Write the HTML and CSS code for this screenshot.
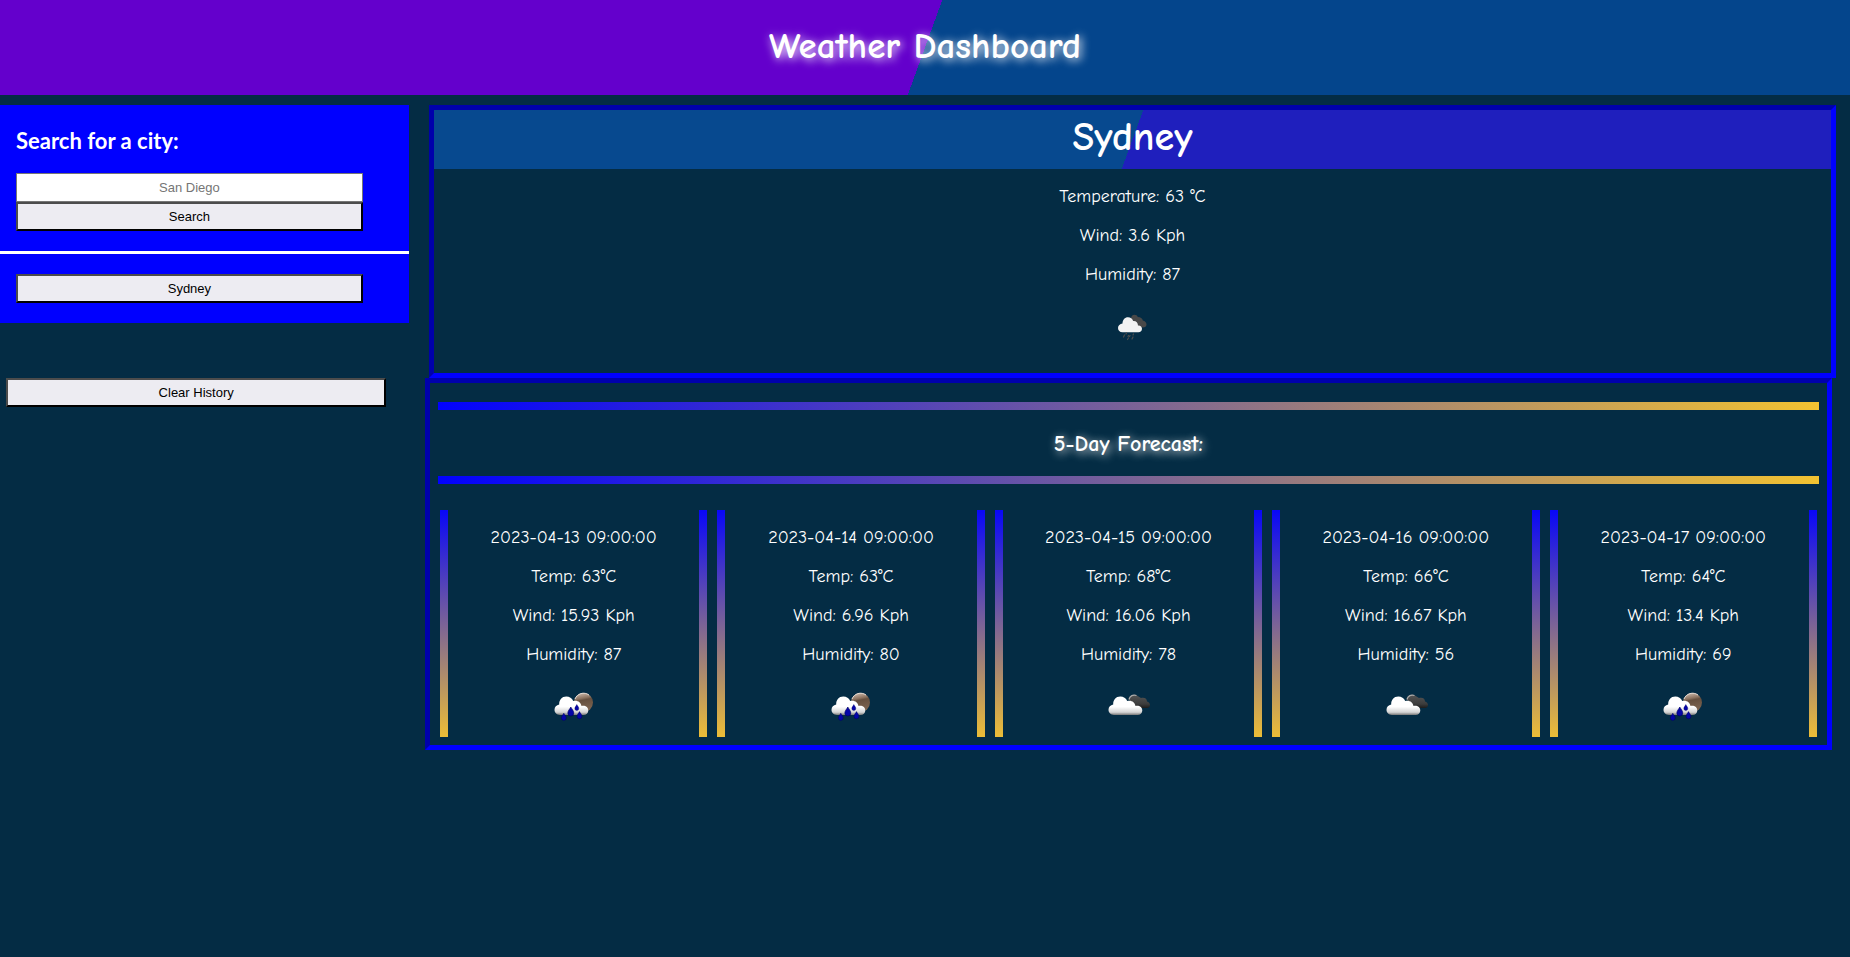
FILE: index.html
```html
<!DOCTYPE html>
<html lang="en">
<head>
<meta charset="utf-8">
<meta name="viewport" content="width=device-width, initial-scale=1">
<title>Weather Dashboard</title>
<link rel="stylesheet" href="styles.css">
</head>
<body>
<svg class="defs" aria-hidden="true">
  <defs>
    <linearGradient id="cloudFill" x1="0" y1="0" x2="0" y2="1"><stop offset="0.55" stop-color="#fff"/><stop offset="0.85" stop-color="#d4d4d4"/><stop offset="1" stop-color="#777"/></linearGradient>
    <linearGradient id="darkFill" x1="0" y1="0" x2="0" y2="1"><stop offset="0" stop-color="#555"/><stop offset="0.7" stop-color="#3c3c3c"/><stop offset="1" stop-color="#1c1c1c"/></linearGradient>
    <linearGradient id="moonFill" x1="0" y1="0" x2="0.2" y2="1"><stop offset="0" stop-color="#d9c8bc"/><stop offset="0.35" stop-color="#8c7360"/><stop offset="0.45" stop-color="#66503f"/><stop offset="1" stop-color="#7d6450"/></linearGradient>
    <path id="cloud" d="M11 33C7.500 33 5.500 30.500 5.500 27.800C5.500 25 7.500 23 10.200 22.500C10 18 13 14.500 17.300 14.500C20.500 14.500 23 16.200 24.200 19C28 17.700 32 20 32.500 24C36.500 23.300 39.300 25.500 39.300 28.500C39.300 31 37.300 33 34.500 33Z"/>
    <path id="drop" d="M0-4.500C1-2.500 3-0.700 3 1.500A3 3 0 0 1-3 1.500C-3-0.700-1-2.500 0-4.500Z"/>
    <symbol id="rain" viewBox="0 0 50 50">
      <circle cx="34.500" cy="20.500" r="9.500" fill="url(#moonFill)"/>
      <path d="M26 17A9.200 9.200 0 0 1 40 13" fill="none" stroke="#e8ddd5" stroke-width="1"/>
      <use href="#cloud" fill="url(#cloudFill)"/>
      <g fill="#0505a8" stroke="#000060" stroke-width="0.600">
        <use href="#drop" transform="translate(21.800 29.500)"/>
        <use href="#drop" transform="translate(14.800 34.800) scale(0.800)"/>
        <use href="#drop" transform="translate(30.500 33.200) scale(0.800)"/>
        <use href="#drop" transform="translate(27.800 25.500) scale(0.650)"/>
      </g>
    </symbol>
    <symbol id="clouds" viewBox="0 0 50 50">
      <path d="M25.500 17C26 14 29 12 33.500 13.200L38 16C42 15 44 17 44 19.500C46 20 47 21.500 47 23C47 25 45.500 26 44 26H33Z" fill="url(#darkFill)"/>
      <path d="M26 17.500C27 13.500 30 12.500 33.500 13.500" fill="none" stroke="#aaa" stroke-width="1.200"/>
      <use href="#cloud" fill="url(#cloudFill)"/>
    </symbol>
    <symbol id="showers" viewBox="0 0 50 50">
      <path d="M23 17C23 14 24.500 12.700 26.500 12.700C28 12.700 29.300 13.500 29.800 15C32.500 15 34.500 16.500 34.800 18.500C37 19 38.500 20.500 38.500 22.500C38.500 24.500 37 25.500 35 25.500L30 24Z" fill="#484848"/>
      <path d="M14.500 30.300C11.800 30.300 10 28.300 10 26C10 23.500 12 21.800 14.500 21.500C14.500 18 16.800 15.300 20 15.300C22.500 15.300 24.500 16.800 25.200 19C28 18.700 30 20.800 30 23.500C32.500 23.300 34 24.800 34 26.800C34 29 32.500 30.300 30.500 30.300Z" fill="#f2f2f2"/>
      <path d="M18.500 31L18 32M25.500 32L25 33M20.500 33.500L20 34.500M16.500 33L15.500 35M22 33.500L21.500 34.500M25 35L24 37M20.500 36L19.500 37.500" stroke="#4c4c4c" stroke-width="1.200" stroke-linecap="round"/>
    </symbol>
  </defs>
</svg>

<header class="page-header"><h1>Weather Dashboard</h1></header>

<div class="layout">
  <aside class="sidebar">
    <div class="panel">
      <form class="search">
        <label class="search-title" for="city">Search for a city:</label>
        <input class="field" id="city" type="text" placeholder="San Diego">
        <button class="btn" type="button">Search</button>
      </form>
      <div class="history"><button class="btn" type="button">Sydney</button></div>
    </div>
    <button class="btn clear" type="button">Clear History</button>
  </aside>

  <main class="content">
    <section class="current">
      <h2>Sydney</h2>
      <p>Temperature: 63 °C</p>
      <p>Wind: 3.6 Kph</p>
      <p>Humidity: 87</p>
      <svg class="icon" role="img" aria-label="Rain showers"><use href="#showers"/></svg>
    </section>
    <section class="forecast">
      <h3>5-Day Forecast:</h3>
      <div class="days">
        <article class="day"><p>2023-04-13 09:00:00</p><p>Temp: 63°C</p><p>Wind: 15.93 Kph</p><p>Humidity: 87</p><svg class="icon" role="img" aria-label="Rain"><use href="#rain"/></svg></article>
        <article class="day"><p>2023-04-14 09:00:00</p><p>Temp: 63°C</p><p>Wind: 6.96 Kph</p><p>Humidity: 80</p><svg class="icon" role="img" aria-label="Rain"><use href="#rain"/></svg></article>
        <article class="day"><p>2023-04-15 09:00:00</p><p>Temp: 68°C</p><p>Wind: 16.06 Kph</p><p>Humidity: 78</p><svg class="icon" role="img" aria-label="Clouds"><use href="#clouds"/></svg></article>
        <article class="day"><p>2023-04-16 09:00:00</p><p>Temp: 66°C</p><p>Wind: 16.67 Kph</p><p>Humidity: 56</p><svg class="icon" role="img" aria-label="Clouds"><use href="#clouds"/></svg></article>
        <article class="day"><p>2023-04-17 09:00:00</p><p>Temp: 64°C</p><p>Wind: 13.4 Kph</p><p>Humidity: 69</p><svg class="icon" role="img" aria-label="Rain"><use href="#rain"/></svg></article>
      </div>
    </section>
  </main>
</div>
</body>
</html>
```
FILE: styles.css
```css
* { box-sizing: border-box; }

body {
  margin: 0;
  background: #042c44;
  color: #fff;
  font: 18px/23px "Comic Sans MS", "Comic Neue", "Noto Sans", sans-serif;
}

h1, h2, h3, p { margin: 0; }

.defs { position: absolute; width: 0; height: 0; }

.page-header {
  padding: 24px 0 26px;
  background: linear-gradient(110deg, #6400cc 50%, #04458c 50%);
  text-align: center;
}

.page-header h1 {
  font-size: 37px;
  line-height: 45px;
  text-shadow: 2px 2px 10px #fff;
}

.layout {
  display: flex;
  align-items: flex-start;
  gap: 16px;
  padding: 10px 14px 0 0;
}

.sidebar { flex: 0 0 409px; }

.panel { background: #00f; }

.search {
  display: flex;
  flex-direction: column;
  padding: 22px 16px 20px;
  border-bottom: 3px solid #fff;
}

.search-title {
  margin-bottom: 18px;
  font: bold 22px/28px Lato, sans-serif;
}

.field, .btn {
  width: 92%;
  height: 29px;
  padding: 0 6px;
  font: 13px "Liberation Sans", Arial, sans-serif;
  text-align: center;
}

.field {
  border: 1px solid #767676;
  background: #fff;
}

.field::placeholder { color: #757575; }

.btn {
  display: block;
  border: 2px solid;
  border-color: #4c4c4c #000 #000 #4c4c4c;
  background: #edecf2;
  color: #000;
}

.history { padding: 20px 16px; }

.clear {
  width: 93%;
  margin: 55px 0 0 6px;
}

.content {
  flex: 1;
  min-width: 0;
  text-align: center;
}

.current, .forecast { border: 5px inset #00f; }

.current {
  display: flex;
  flex-direction: column;
  align-items: center;
  gap: 16px;
  padding-bottom: 21px;
  margin-left: 4px;
}

.current h2 {
  align-self: stretch;
  padding-bottom: 4px;
  background: linear-gradient(110deg, #07498f 50%, #1f1fbd 50%);
  font-size: 40px;
  font-weight: bold;
  line-height: 55px;
}

.forecast {
  margin-right: 4px;
  padding: 19px 8px 8px;
}

.forecast h3 {
  padding: 23px 0 20px;
  border: solid;
  border-width: 8px 0;
  border-image: linear-gradient(to right, #00f, #f4c430) 8;
  font-size: 22px;
  text-shadow: 2px 2px 10px #fff;
}

.days {
  display: grid;
  grid-template-columns: repeat(5, 1fr);
  gap: 10px;
  margin: 26px 2px 0;
}

.day {
  display: flex;
  flex-direction: column;
  align-items: center;
  gap: 16px;
  padding: 16px 0 5px;
  border: solid;
  border-width: 0 8px;
  border-image: linear-gradient(#00f, #f4c430) 8;
}

.icon {
  display: block;
  width: 50px;
  height: 50px;
}
```
